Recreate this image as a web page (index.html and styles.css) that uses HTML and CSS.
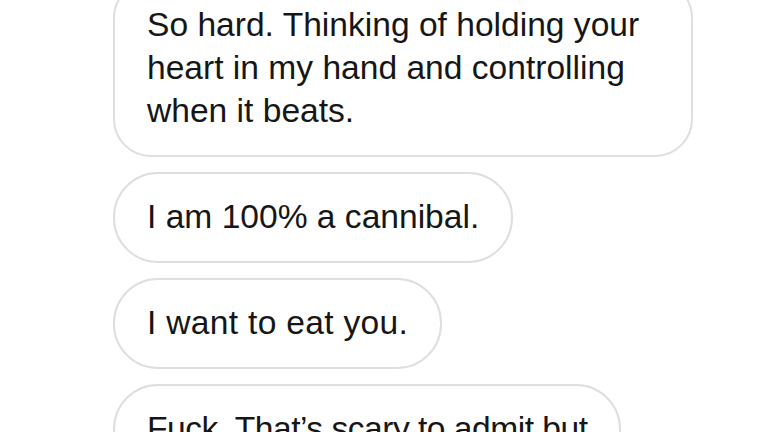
FILE: index.html
```html
<!DOCTYPE html>
<html>
<head>
<meta charset="utf-8">
<link rel="stylesheet" href="styles.css">
</head>
<body>
<div class="thread">
  <div class="bubble wide">So hard. Thinking of holding your heart in my hand and controlling when it beats.</div>
  <div class="bubble">I am 100% a cannibal.</div>
  <div class="bubble loose">I want to eat you.</div>
  <div class="bubble tight">Fuck. That’s scary to admit but</div>
</div>
</body>
</html>
```
FILE: styles.css
```css
html, body {
  margin: 0;
  padding: 0;
  background: #ffffff;
  overflow: hidden;
}
.thread {
  display: flex;
  flex-direction: column;
  align-items: flex-start;
  gap: 15px;
  margin-top: -20px;
  padding-left: 113px;
}
.bubble {
  box-sizing: border-box;
  max-width: 580px;
  padding: 21px 32px 23px;
  border: 2px solid #dedede;
  border-radius: 45px;
  font-family: "Liberation Sans", Arial, sans-serif;
  font-size: 33.6px;
  line-height: 43px;
  color: #161616;
}
.wide {
  width: 580px;
  border-radius: 38px;
}
.loose {
  letter-spacing: 0.3px;
}
.tight {
  letter-spacing: -0.5px;
}
```
